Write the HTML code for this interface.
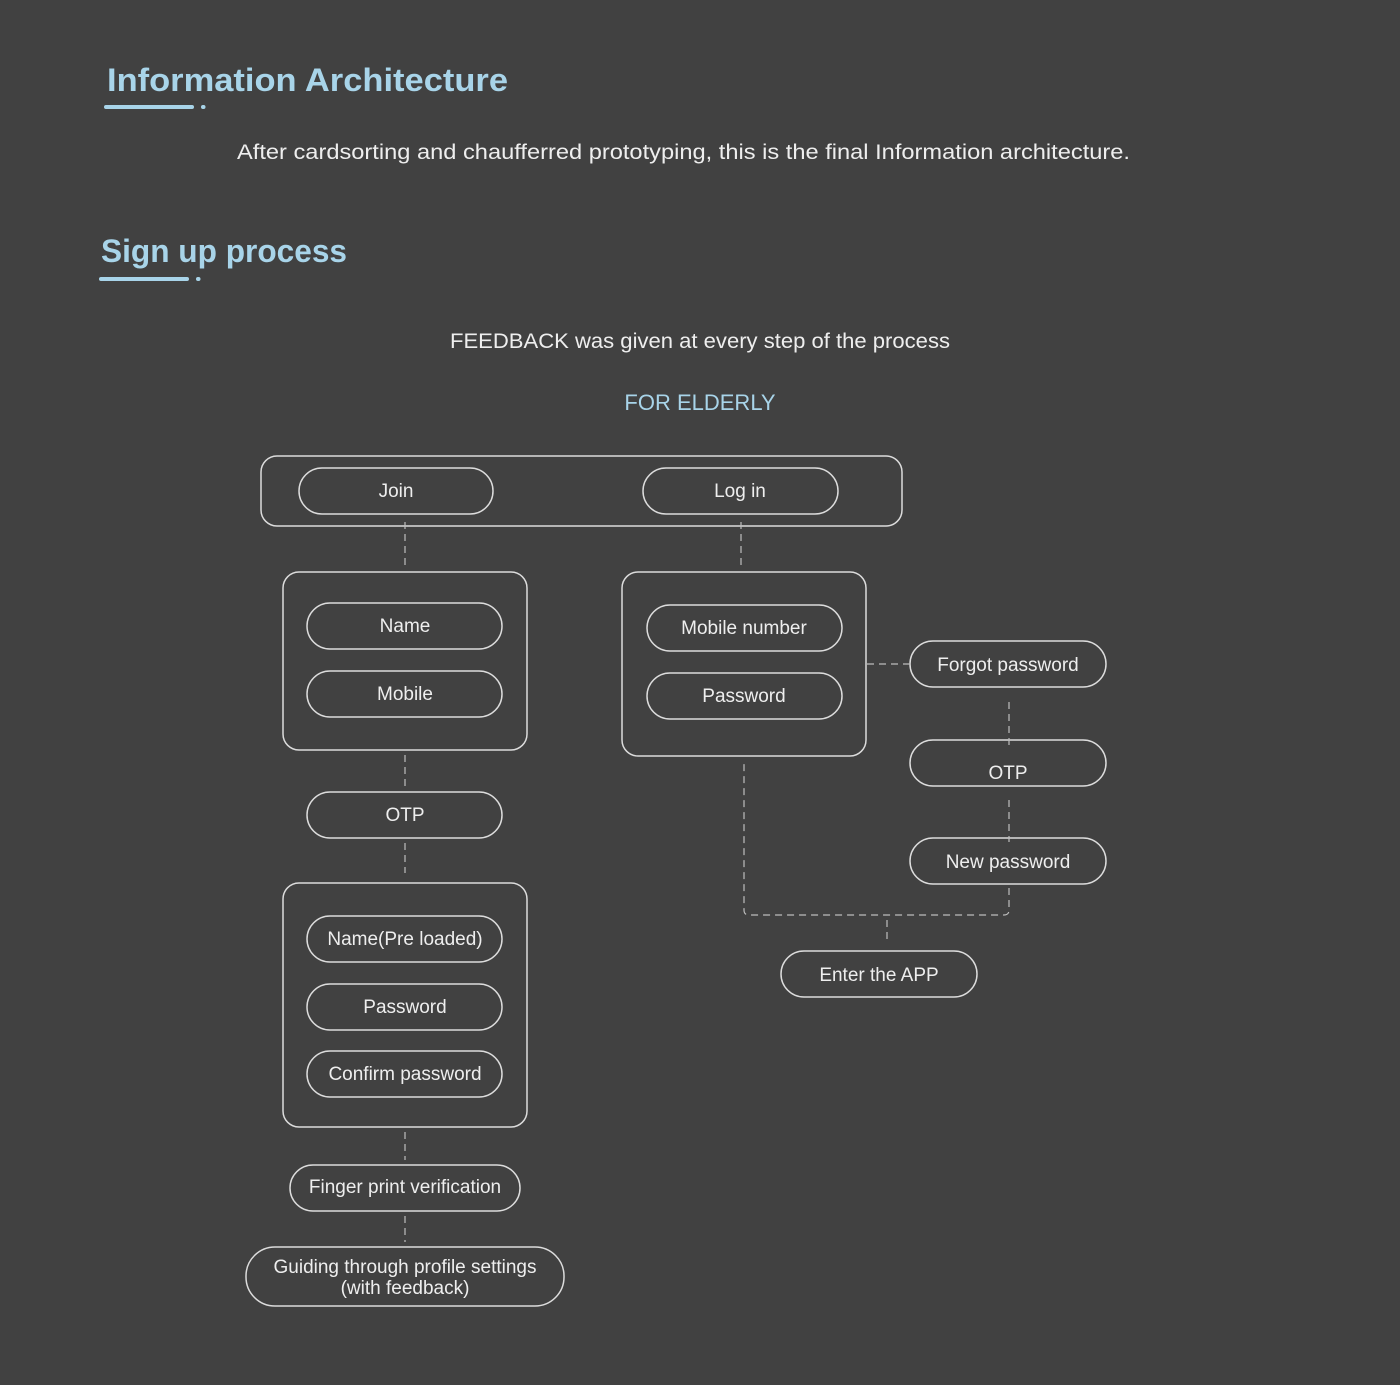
<!DOCTYPE html>
<html><head><meta charset="utf-8"><style>
html,body{margin:0;padding:0;background:#414141;}
svg{display:block}
text{font-family:"Liberation Sans",sans-serif;}
</style></head><body>
<svg width="1400" height="1385" viewBox="0 0 1400 1385" xmlns="http://www.w3.org/2000/svg">
<rect width="1400" height="1385" fill="#414141"/>
<g fill="#a8d4e9" font-weight="bold" font-size="32">
<text x="107" y="91" textLength="401" lengthAdjust="spacingAndGlyphs">Information Architecture</text>
<text x="101" y="262" textLength="246" lengthAdjust="spacingAndGlyphs">Sign up process</text>
</g>
<g stroke="#a8d4e9" stroke-width="4" stroke-linecap="round">
<line x1="106" y1="107" x2="192" y2="107"/><line x1="203" y1="107" x2="203.5" y2="107"/>
<line x1="101" y1="279" x2="187" y2="279"/><line x1="198" y1="279" x2="198.5" y2="279"/>
</g>
<text x="237" y="159" font-size="21" fill="#eeeeee" textLength="893" lengthAdjust="spacingAndGlyphs">After cardsorting and chaufferred prototyping, this is the final Information architecture.</text>
<text x="450" y="348" font-size="21" fill="#eeeeee" textLength="500" lengthAdjust="spacingAndGlyphs">FEEDBACK was given at every step of the process</text>
<text x="700" y="410" font-size="22" fill="#a8d4e9" text-anchor="middle">FOR ELDERLY</text>
<g fill="none" stroke="#dcdcdc" stroke-width="1.5">
<rect x="261" y="456" width="641" height="70" rx="16"/>
<rect x="299" y="468" width="194" height="46" rx="23"/>
<rect x="643" y="468" width="195" height="46" rx="23"/>
<rect x="283" y="572" width="244" height="178" rx="16"/>
<rect x="307" y="603" width="195" height="46" rx="23"/>
<rect x="307" y="671" width="195" height="46" rx="23"/>
<rect x="307" y="792" width="195" height="46" rx="23"/>
<rect x="283" y="883" width="244" height="244" rx="16"/>
<rect x="307" y="916" width="195" height="46" rx="23"/>
<rect x="307" y="984" width="195" height="46" rx="23"/>
<rect x="307" y="1051" width="195" height="46" rx="23"/>
<rect x="290" y="1165" width="230" height="46" rx="23"/>
<rect x="246" y="1247" width="318" height="59" rx="29"/>
<rect x="622" y="572" width="244" height="184" rx="16"/>
<rect x="647" y="605" width="195" height="46" rx="23"/>
<rect x="647" y="673" width="195" height="46" rx="23"/>
<rect x="910" y="641" width="196" height="46" rx="23"/>
<rect x="910" y="740" width="196" height="46" rx="23"/>
<rect x="910" y="838" width="196" height="46" rx="23"/>
<rect x="781" y="951" width="196" height="46" rx="23"/>
</g>
<g fill="none" stroke="#bdbdbd" stroke-width="1.2" stroke-dasharray="7,5">
<line x1="405" y1="522" x2="405" y2="566"/>
<line x1="741" y1="522" x2="741" y2="566"/>
<line x1="405" y1="755" x2="405" y2="787"/>
<line x1="405" y1="843" x2="405" y2="873"/>
<line x1="405" y1="1132" x2="405" y2="1160"/>
<line x1="405" y1="1216" x2="405" y2="1242"/>
<line x1="867" y1="664" x2="910" y2="664"/>
<line x1="1009" y1="702" x2="1009" y2="746"/>
<line x1="1009" y1="800" x2="1009" y2="842"/>
<path d="M1009 888 V910 q0 5 -5 5 H749 q-5 0 -5 -5 V760"/>
<line x1="887" y1="920" x2="887" y2="944"/>
</g>
<g fill="#eeeeee" font-size="19" text-anchor="middle">
<text x="396" y="497">Join</text>
<text x="740" y="497">Log in</text>
<text x="405" y="632">Name</text>
<text x="405" y="700">Mobile</text>
<text x="405" y="821">OTP</text>
<text x="405" y="945">Name(Pre loaded)</text>
<text x="405" y="1013">Password</text>
<text x="405" y="1080">Confirm password</text>
<text x="405" y="1193">Finger print verification</text>
<text x="405" y="1273">Guiding through profile settings</text>
<text x="405" y="1294">(with feedback)</text>
<text x="744" y="634">Mobile number</text>
<text x="744" y="702">Password</text>
<text x="1008" y="671">Forgot password</text>
<text x="1008" y="779">OTP</text>
<text x="1008" y="868">New password</text>
<text x="879" y="981">Enter the APP</text>
</g>
</svg>
</body></html>
